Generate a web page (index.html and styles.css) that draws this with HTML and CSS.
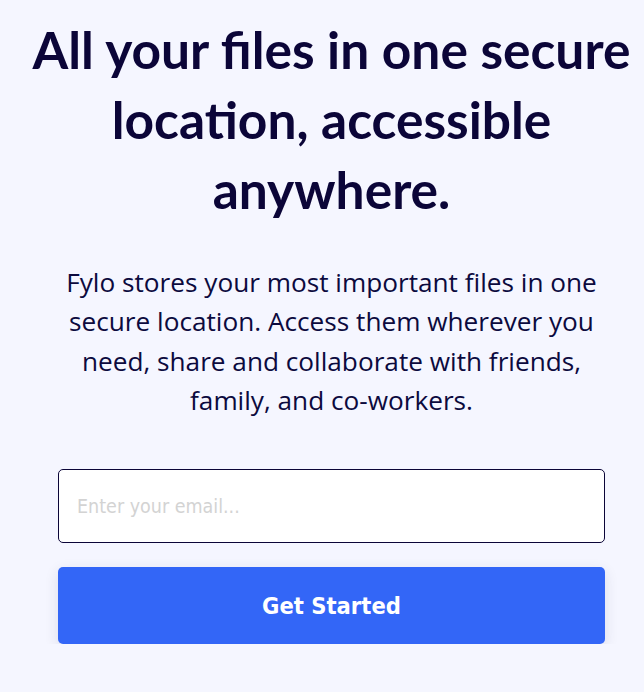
FILE: index.html
```html
<!DOCTYPE html>
<html lang="en">
<head>
<meta charset="utf-8">
<title>Fylo</title>
<link rel="stylesheet" href="styles.css">
</head>
<body>
<main class="hero">
  <h1 class="hero-title">All your files in one secure location, accessible anywhere.</h1>
  <p class="hero-text">Fylo stores your most important files in one secure location. Access them wherever you need, share and collaborate with friends, family, and co-workers.</p>
  <form class="signup" onsubmit="return false">
    <input class="signup-input" type="email" placeholder="Enter your email...">
    <button class="signup-button" type="submit">Get Started</button>
  </form>
</main>
</body>
</html>
```

FILE: styles.css
```css
* { box-sizing: border-box; }
html, body { margin: 0; padding: 0; }
body {
  background: #f5f6ff;
  color: #0c0a3e;
  font-family: "Open Sans", sans-serif;
}
.hero {
  padding: 0 0 0 19px;
  display: flex;
  flex-direction: column;
  align-items: center;
  text-align: center;
}
.hero-title {
  margin: 14px 0 0;
  width: 625px;
  font-family: "Lato", sans-serif;
  font-weight: 700;
  font-size: 51.5px;
  line-height: 70px;
  color: #0b0538;
}
.hero-text {
  margin: 39px 0 0;
  width: 547px;
  font-size: 26.2px;
  line-height: 39.3px;
  color: #0c0a3e;
}
.signup {
  margin-top: 49px;
  width: 547px;
  display: flex;
  flex-direction: column;
  gap: 24px;
}
.signup-input {
  height: 74px;
  border: 1px solid #0b0538;
  border-radius: 5px;
  background: #fff;
  padding: 0 18px;
  font-family: "DejaVu Sans", sans-serif;
  font-stretch: condensed;
  font-size: 19.5px;
  color: #0b0538;
}
.signup-input::placeholder { color: #d3d3d3; }
.signup-button {
  height: 77px;
  border: 0;
  border-radius: 5px;
  background: #3366f7;
  color: #fff;
  font-family: "DejaVu Sans", sans-serif;
  font-stretch: condensed;
  font-weight: 700;
  font-size: 23.5px;
  box-shadow: 0 4px 14px rgba(40, 40, 80, 0.12);
  cursor: pointer;
}
```
